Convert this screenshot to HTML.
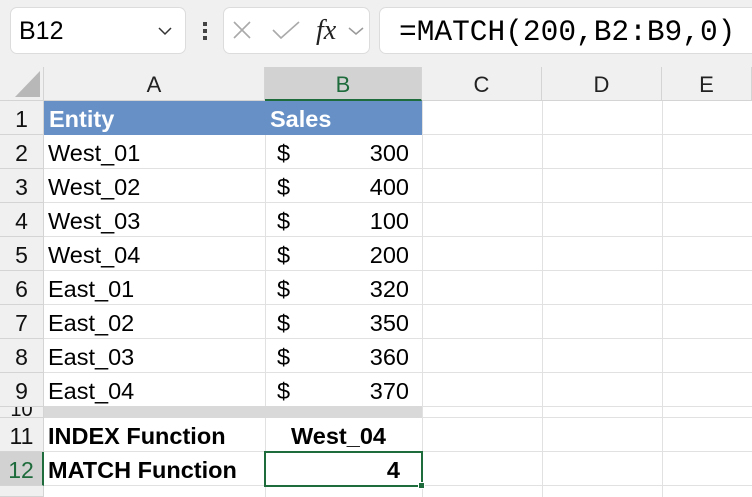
<!DOCTYPE html>
<html><head><style>
*{margin:0;padding:0;box-sizing:border-box}
body{width:752px;height:497px;overflow:hidden;background:#fff;font-family:"Liberation Sans",sans-serif;position:relative}
.tb{position:absolute;left:0;top:0;width:752px;height:67px;background:#f0f0f0}
.box{position:absolute;top:7px;height:47px;background:#fff;border:1px solid #dcdcdc;border-radius:7px}
.abs{position:absolute}
.ch{position:absolute;top:67px;height:34px;background:#f0f0f0;border-right:1px solid #d4d4d4;border-bottom:1px solid #d4d4d4;font-size:22px;text-align:center;line-height:36px;color:#222}
.rh{position:absolute;left:0;width:44px;background:#f0f0f0;border-right:1px solid #d4d4d4;border-bottom:1px solid #d4d4d4;font-size:23px;text-align:center;line-height:36px;color:#111;height:34px}
.vl{position:absolute;top:101px;width:1px;height:396px;background:#e1e1e1}
.hl{position:absolute;left:44px;width:708px;height:1px;background:#e1e1e1}
.t{position:absolute;font-size:23.5px;line-height:36px;color:#000}
</style></head><body>
<div class="tb"></div>
<div class="box" style="left:10px;width:176px"></div>
<div class="abs" style="left:19px;top:13px;font-size:25px;line-height:36px;">B12</div>
<svg class="abs" style="left:158px;top:26px" width="14" height="10"><path d="M1 2 L7 8 L13 2" stroke="#333" stroke-width="1.5" fill="none"/></svg>
<div class="abs" style="left:203px;top:22px;width:4px;height:4px;background:#444"></div>
<div class="abs" style="left:203px;top:29px;width:4px;height:4px;background:#444"></div>
<div class="abs" style="left:203px;top:36px;width:4px;height:4px;background:#444"></div>
<div class="box" style="left:223px;width:147px"></div>
<svg class="abs" style="left:232px;top:20px" width="20" height="20"><path d="M2 2 L18 18 M18 2 L2 18" stroke="#aaa" stroke-width="1.6"/></svg>
<svg class="abs" style="left:272px;top:20px" width="30" height="20"><path d="M1 10 L9 18 L27 2" stroke="#aaa" stroke-width="1.6" fill="none"/></svg>
<div class="abs" style="left:316px;top:14px;font-family:'Liberation Serif',serif;font-style:italic;font-size:28px;line-height:34px;color:#222">fx</div>
<svg class="abs" style="left:348px;top:26px" width="16" height="10"><path d="M1 2 L8 8 L15 2" stroke="#999" stroke-width="1.5" fill="none"/></svg>
<div class="box" style="left:379px;width:390px"></div>
<div class="abs" style="left:399px;top:14px;font-family:'Liberation Mono',monospace;font-size:29.5px;line-height:36px;color:#000">=MATCH(200,B2:B9,0)</div>

<div class="ch" style="left:0;width:44px"></div>
<svg class="abs" style="left:14px;top:70px" width="28" height="28"><path d="M26 1 L26 27 L1 27 Z" fill="#b8b8b8"/></svg>
<div class="ch" style="left:44px;width:221px">A</div>
<div class="ch" style="left:265px;width:157px;background:#d2d2d2;color:#1e6b3c;border-bottom:2px solid #1e6b3c">B</div>
<div class="ch" style="left:422px;width:120px">C</div>
<div class="ch" style="left:542px;width:120px">D</div>
<div class="ch" style="left:662px;width:90px">E</div>

<div class="vl" style="left:265px"></div><div class="vl" style="left:422px"></div><div class="vl" style="left:542px"></div><div class="vl" style="left:662px"></div>
<div class="hl" style="top:134px"></div><div class="hl" style="top:168px"></div><div class="hl" style="top:202px"></div><div class="hl" style="top:236px"></div><div class="hl" style="top:270px"></div><div class="hl" style="top:304px"></div><div class="hl" style="top:338px"></div><div class="hl" style="top:372px"></div><div class="hl" style="top:406px"></div><div class="hl" style="top:417px"></div><div class="hl" style="top:451px"></div><div class="hl" style="top:485px"></div>

<div class="abs" style="left:44px;top:101px;width:378px;height:34px;background:#6690c6"></div>
<div class="abs" style="left:44px;top:406px;width:378px;height:12px;background:#d9d9d9"></div>

<div class="rh" style="top:101px">1</div><div class="rh" style="top:135px">2</div><div class="rh" style="top:169px">3</div><div class="rh" style="top:203px">4</div><div class="rh" style="top:237px">5</div><div class="rh" style="top:271px">6</div><div class="rh" style="top:305px">7</div><div class="rh" style="top:339px">8</div><div class="rh" style="top:373px">9</div>
<div class="rh" style="top:407px;height:11px;line-height:6px;overflow:hidden;font-size:20px">10</div>
<div class="rh" style="top:418px">11</div>
<div class="rh" style="top:452px;background:#d2d2d2;color:#1e6b3c;border-right:2px solid #1e6b3c">12</div>
<div class="rh" style="top:486px;line-height:40px;overflow:hidden;height:11px">13</div>

<div class="t" style="left:49px;top:101px;color:#fff;font-weight:bold">Entity</div>
<div class="t" style="left:270px;top:101px;color:#fff;font-weight:bold">Sales</div>
<div class="t" style="left:48px;top:135px">West_01</div>
<div class="t" style="left:48px;top:169px">West_02</div>
<div class="t" style="left:48px;top:203px">West_03</div>
<div class="t" style="left:48px;top:237px">West_04</div>
<div class="t" style="left:48px;top:271px">East_01</div>
<div class="t" style="left:48px;top:305px">East_02</div>
<div class="t" style="left:48px;top:339px">East_03</div>
<div class="t" style="left:48px;top:373px">East_04</div>
<div class="t" style="left:277px;top:135px">$</div><div class="t" style="left:277px;top:169px">$</div><div class="t" style="left:277px;top:203px">$</div><div class="t" style="left:277px;top:237px">$</div><div class="t" style="left:277px;top:271px">$</div><div class="t" style="left:277px;top:305px">$</div><div class="t" style="left:277px;top:339px">$</div><div class="t" style="left:277px;top:373px">$</div>
<div class="t" style="left:330px;width:79px;text-align:right;top:135px">300</div>
<div class="t" style="left:330px;width:79px;text-align:right;top:169px">400</div>
<div class="t" style="left:330px;width:79px;text-align:right;top:203px">100</div>
<div class="t" style="left:330px;width:79px;text-align:right;top:237px">200</div>
<div class="t" style="left:330px;width:79px;text-align:right;top:271px">320</div>
<div class="t" style="left:330px;width:79px;text-align:right;top:305px">350</div>
<div class="t" style="left:330px;width:79px;text-align:right;top:339px">360</div>
<div class="t" style="left:330px;width:79px;text-align:right;top:373px">370</div>
<div class="t" style="left:48px;top:418px;font-weight:bold">INDEX Function</div>
<div class="t" style="left:260px;width:157px;text-align:center;top:418px;font-weight:bold">West_04</div>
<div class="t" style="left:48px;top:452px;font-weight:bold">MATCH Function</div>
<div class="abs" style="left:264px;top:451px;width:159px;height:36px;border:2px solid #1e6b3c"></div>
<div class="abs" style="left:418px;top:482px;width:7px;height:7px;background:#1e6b3c;border:1px solid #fff"></div>
<div class="t" style="left:330px;width:70px;text-align:right;top:452px;font-weight:bold">4</div>
</body></html>
